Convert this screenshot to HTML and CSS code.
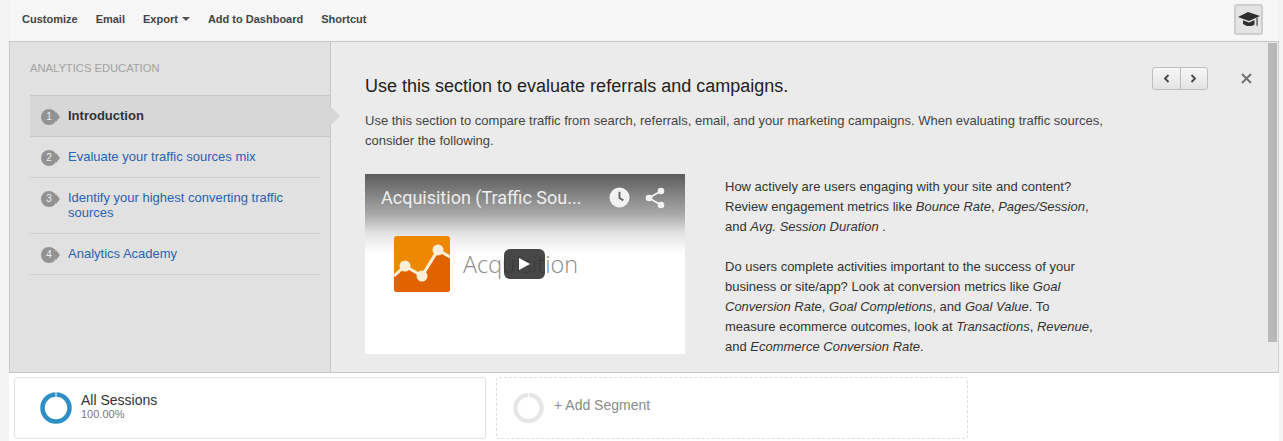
FILE: index.html
```html
<!DOCTYPE html>
<html lang="en">
<head>
<meta charset="utf-8">
<title>Analytics Education</title>
<link rel="stylesheet" href="styles.css">
</head>
<body>
<header class="toolbar">
  <nav class="actions">
    <a>Customize</a>
    <a>Email</a>
    <a class="export">Export <i class="caret"></i></a>
    <a>Add to Dashboard</a>
    <a>Shortcut</a>
  </nav>
  <button class="edu-btn" aria-label="Education">
    <svg width="22" height="16" viewBox="0 0 22 16"><path fill="#2f2f2f" d="M10 0 22 4 11 9 0 5Z"/><path fill="#2f2f2f" d="M5 8.200l6 2.300 5.500-2.500v4.500c-1.400 1-3.300 1.600-5.500 1.600s-4.400-.8-6-2.400Z"/><path fill="#2f2f2f" d="M18.500 5.800h1.100v8h-1.100z"/></svg>
  </button>
</header>

<section class="panel">
  <aside class="sidebar">
    <h2 class="side-title">ANALYTICS EDUCATION</h2>
    <ol class="steps">
      <li class="step active"><span class="num">1</span><span class="label">Introduction</span></li>
      <li class="step"><span class="num">2</span><a class="label">Evaluate your traffic sources mix</a></li>
      <li class="step"><span class="num">3</span><a class="label">Identify your highest converting traffic sources</a></li>
      <li class="step"><span class="num">4</span><a class="label">Analytics Academy</a></li>
    </ol>
  </aside>
  <main class="content">
    <div class="controls">
      <div class="pager">
        <button class="page-btn" aria-label="Previous"><svg width="7" height="9" viewBox="0 0 7 9"><path d="M5.500 1 2 4.500 5.500 8" fill="none" stroke="#444" stroke-width="1.800"/></svg></button>
        <button class="page-btn" aria-label="Next"><svg width="7" height="9" viewBox="0 0 7 9"><path d="M1.500 1 5 4.500 1.500 8" fill="none" stroke="#444" stroke-width="1.800"/></svg></button>
      </div>
      <svg class="close" width="11" height="11" viewBox="0 0 11 11"><path d="M1 1l9 9M10 1l-9 9" stroke="#6e6e6e" stroke-width="1.800" fill="none"/></svg>
    </div>
    <h1 class="title">Use this section to evaluate referrals and campaigns.</h1>
    <p class="intro">Use this section to compare traffic from search, referrals, email, and your marketing campaigns. When evaluating traffic sources, consider the following.</p>
    <div class="columns">
      <div class="video">
        <div class="video-top">
          <span class="video-title">Acquisition (Traffic Sou...</span>
          <svg class="clock" width="21" height="21" viewBox="0 0 22 22"><circle cx="11" cy="11" r="10.500" fill="#f2f2f2"/><path d="M11 5v6.500l4 2.500" fill="none" stroke="#666" stroke-width="2"/></svg>
          <svg class="share" width="20" height="22" viewBox="0 0 20 22"><circle cx="16" cy="4" r="3.300" fill="#f2f2f2"/><circle cx="4" cy="11" r="3.300" fill="#f2f2f2"/><circle cx="16" cy="18" r="3.300" fill="#f2f2f2"/><path d="M16 4 4 11l12 7" fill="none" stroke="#f2f2f2" stroke-width="1.800"/></svg>
        </div>
        <div class="video-body">
          <svg class="ga-logo" width="56" height="56" viewBox="0 0 56 56">
            <rect width="56" height="56" rx="3" fill="#ee8800"/>
            <path d="M0 40 11 30 28 40 44 14 56 21V53a3 3 0 0 1-3 3H3a3 3 0 0 1-3-3Z" fill="#e06300"/>
            <path d="M0 40 11 30 28 40 44 14 56 21" fill="none" stroke="#fdeed8" stroke-width="3"/>
            <circle cx="11" cy="30" r="5.500" fill="#fdeed8"/><circle cx="28" cy="40" r="5.500" fill="#fdeed8"/><circle cx="44" cy="14" r="5.500" fill="#fdeed8"/>
          </svg>
          <span class="video-word">Acquisition</span>
          <span class="play"><svg width="13" height="14" viewBox="0 0 13 14"><path d="M1 1l11 6-11 6Z" fill="#fff"/></svg></span>
        </div>
      </div>
      <div class="copy">
        <p>How actively are users engaging with your site and content? Review engagement metrics like <em>Bounce Rate</em>, <em>Pages/Session</em>, and <em>Avg. Session Duration</em> .</p>
        <p>Do users complete activities important to the success of your business or site/app? Look at conversion metrics like <em>Goal Conversion Rate</em>, <em>Goal Completions</em>, and <em>Goal Value</em>. To measure ecommerce outcomes, look at <em>Transactions</em>, <em>Revenue</em>, and <em>Ecommerce Conversion Rate</em>.</p>
      </div>
    </div>
    <div class="scrollbar"></div>
  </main>
</section>

<section class="segments">
  <div class="segment">
    <svg class="ring" width="32" height="32" viewBox="0 0 32 32"><circle cx="16" cy="16" r="13.500" fill="none" stroke="#2d8fc6" stroke-width="4.500"/><path d="M16 0v5" stroke="#fff" stroke-width="1"/></svg>
    <div class="seg-text"><div class="seg-name">All Sessions</div><div class="seg-pct">100.00%</div></div>
  </div>
  <div class="segment add">
    <svg class="ring" width="31" height="32" viewBox="0 0 32 32"><circle cx="16" cy="16" r="13.500" fill="none" stroke="#e6e6e6" stroke-width="4.500"/><path d="M16 0v5" stroke="#fff" stroke-width="1"/></svg>
    <span class="add-label">+ Add Segment</span>
  </div>
</section>
</body>
</html>
```

FILE: styles.css
```css
* { box-sizing: border-box; }
html, body { margin: 0; padding: 0; height: 441px; overflow: hidden; }
body { background: #f3f3f3; font-family: "Liberation Sans", Arial, sans-serif; color: #333; }

.toolbar { height: 41px; margin: 0 4px 0 9px; background: #f6f6f6; display: flex; align-items: center; justify-content: space-between; padding: 0 16px 0 13px; }
.actions { display: flex; gap: 18px; font-size: 11px; font-weight: bold; color: #444; margin-top: -3px; }
.caret { display: inline-block; width: 0; height: 0; border: 4px solid transparent; border-top: 4px solid #555; border-bottom: 0; margin-left: 1px; vertical-align: 2px; }
.edu-btn { width: 29px; height: 31px; margin-top: -2px; padding: 0; background: #e4e4e4; border: 2px solid #cecece; border-radius: 3px; display: flex; align-items: center; justify-content: center; }

.panel { margin: 0 4px 0 9px; height: 332px; display: flex; border: 1px solid #c6c6c6; border-right-color: #d0d0d0; background: #ebebeb; }
.sidebar { width: 321px; flex: none; background: #e1e1e1; border-right: 1px solid #c6c6c6; padding: 20px 0 0 20px; }
.side-title { margin: 0; font-size: 11.200px; font-weight: normal; line-height: 13px; color: #a3a3a3; }
.steps { list-style: none; margin: 20px 0 0; padding: 0; }
.step { display: flex; align-items: flex-start; width: 290px; padding: 12px 0 13px 11px; border-bottom: 1px solid #d0d0d0; font-size: 13px; line-height: 15px; }
.step.active { width: 300px; background: #d7d7d7; border-top: 1px solid #c9c9c9; border-bottom-color: #c9c9c9; position: relative; padding: 12px 0 13px 11px; }
.step.active::after { content: ""; position: absolute; right: -10px; top: 10px; border: 10px solid transparent; border-left-color: #d7d7d7; border-right: 0; }
.step .label { color: #2a62b0; }
.step.active .label { color: #333; font-weight: bold; }
.num { flex: none; width: 16px; height: 16px; margin: 1px 11px -2px 0; background: #929292; border-radius: 50%; color: #eee; font-size: 10px; line-height: 16px; text-align: center; position: relative; }
.num::after { content: ""; position: absolute; right: -3px; top: 3px; border: 5px solid transparent; border-left: 4px solid #929292; border-right: 0; }

.content { flex: 1; position: relative; padding: 33px 0 0 34px; overflow: hidden; min-width: 0; }
.controls { position: absolute; top: 25px; right: 26px; display: flex; align-items: center; gap: 33px; }
.pager { display: flex; width: 56px; height: 23px; border: 1px solid #bdbdbd; border-radius: 3px; background: linear-gradient(#f6f6f6, #e4e4e4); }
.page-btn { flex: 1; padding: 0; border: 0; background: none; display: flex; align-items: center; justify-content: center; }
.page-btn + .page-btn { border-left: 1px solid #bbb; }
.close { flex: none; }
.scrollbar { position: absolute; top: 1px; right: 1px; height: 299px; width: 9px; background: #b8b8b8; }
.title { margin: 0; font-size: 18px; font-weight: normal; line-height: 22px; color: #222; }
.intro { margin: 14px 0 0; width: 745px; font-size: 13px; line-height: 20px; color: #444; }
.columns { display: flex; margin-top: 23px; }
.video { width: 320px; height: 180px; flex: none; background: #fff; position: relative; overflow: hidden; }
.video-top { height: 80px; display: flex; align-items: flex-start; padding: 13px 0 0 16px; background: linear-gradient(#5c5c5c, #a8a8a8 50%, #e4e4e4 75%, #fff); }
.video-title { font-family: Roboto, "Liberation Sans", sans-serif; font-size: 18px; line-height: 22px; width: 228px; color: #eee; white-space: nowrap; }
.clock { margin-right: 15px; flex: none; }
.share { flex: none; }
.video-body { position: absolute; left: 0; right: 0; top: 0; bottom: 0; }
.ga-logo { position: absolute; left: 29px; top: 62px; }
.video-word { position: absolute; left: 98px; top: 73px; font-family: "Open Sans", sans-serif; font-weight: 300; font-size: 23.400px; line-height: 34px; color: #8a8a8a; }
.play { position: absolute; left: 139px; top: 75px; width: 41px; height: 30px; border-radius: 6px; background: rgba(45,45,45,.88); display: flex; align-items: center; justify-content: center; }
.copy { margin-left: 40px; width: 372px; font-size: 13px; line-height: 20px; color: #333; }
.copy p { margin: 3px 0 20px; }

.segments { margin: 0 4px 0 9px; height: 68px; background: #fff; display: flex; gap: 10px; padding: 4px 0 0 5px; }
.segment { width: 472px; height: 62px; background: #fff; border: 1px solid #e2e2e2; border-radius: 3px; display: flex; align-items: center; padding: 0 0 0 25px; }
.segment .ring { flex: none; margin-right: 9px; }
.seg-text { margin-top: -3px; }
.seg-name { font-size: 14px; line-height: 16px; color: #333; }
.seg-pct { font-size: 11px; line-height: 13px; color: #777; }
.segment.add { border: 1px dashed #ddd; padding-left: 16px; }
.add-label { font-size: 14px; color: #8a8a8a; margin: -6px 0 0 1px; }
```
